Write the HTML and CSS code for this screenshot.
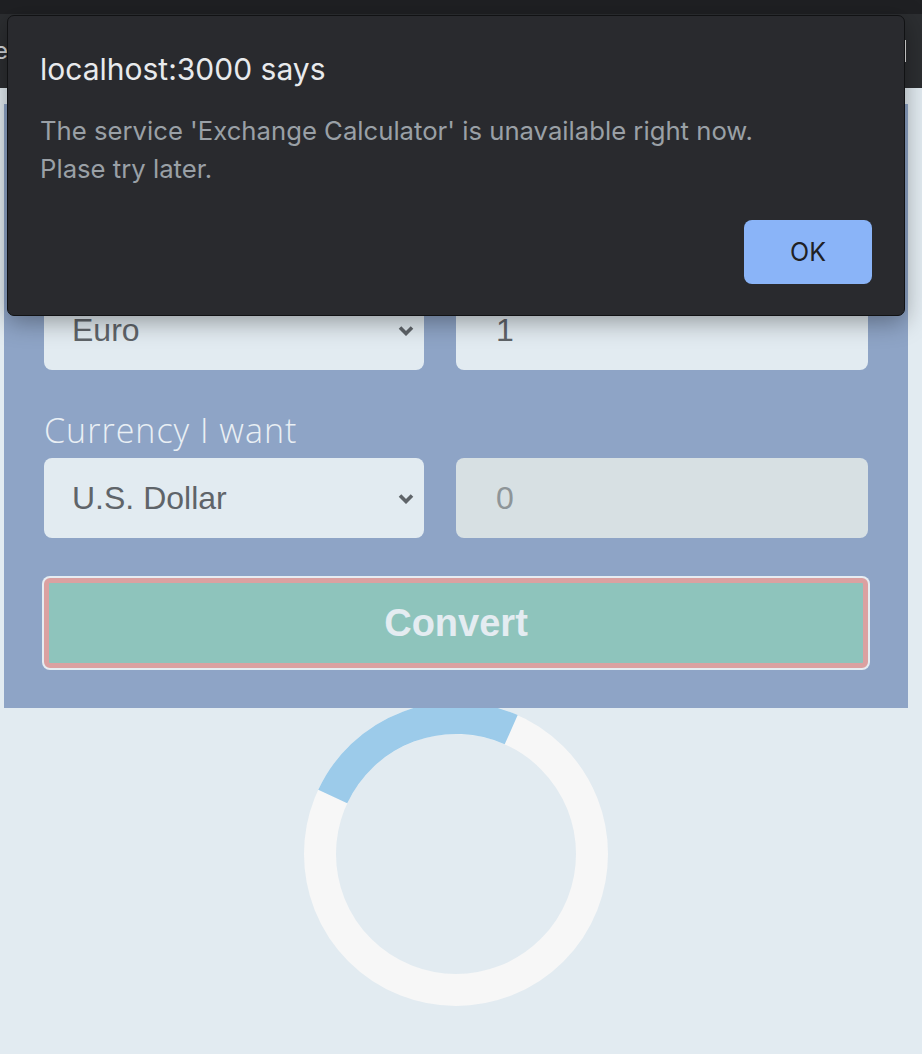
FILE: index.html
```html
<!DOCTYPE html>
<html lang="en">
<head>
<meta charset="utf-8">
<title>Exchange Calculator</title>
<link rel="stylesheet" href="styles.css">
</head>
<body>
<div class="chrome">
  <div class="chrome-top"></div>
  <div class="chrome-bar">
    <span class="tab-text">e</span>
    <span class="caret"></span>
  </div>
</div>
<main class="page">
  <section class="panel">
    <label class="label">Currency I have</label>
    <div class="row">
      <div class="select-wrap">
        <select class="field select"><option>Euro</option></select>
        <svg class="chev" width="16" height="11" viewBox="0 0 16 11"><path d="M2 2.5 L8 8.5 L14 2.5" fill="none" stroke="#5f6469" stroke-width="3.6"/></svg>
      </div>
      <input class="field input" value="1">
    </div>
    <label class="label label-want">Currency I want</label>
    <div class="row">
      <div class="select-wrap">
        <select class="field select"><option>U.S. Dollar</option></select>
        <svg class="chev" width="16" height="11" viewBox="0 0 16 11"><path d="M2 2.5 L8 8.5 L14 2.5" fill="none" stroke="#5f6469" stroke-width="3.6"/></svg>
      </div>
      <input class="field input" value="0" disabled>
    </div>
    <button class="convert">Convert</button>
  </section>
  <div class="spinner">
    <svg width="304" height="304" viewBox="0 0 304 304">
      <circle cx="152" cy="152" r="136" fill="none" stroke="#f7f7f7" stroke-width="32"/>
      <circle cx="152" cy="152" r="136" fill="none" stroke="#9ccbea" stroke-width="32" stroke-dasharray="211 700" transform="rotate(205 152 152)"/>
    </svg>
  </div>
</main>
<div class="dialog" role="alertdialog">
  <div class="dialog-title">localhost:3000 says</div>
  <div class="dialog-body">
    <p class="dialog-line">The service 'Exchange Calculator' is unavailable right now.</p>
    <p class="dialog-line">Plase try later.</p>
  </div>
  <div class="dialog-actions"><button class="ok">OK</button></div>
</div>
</body>
</html>
```

FILE: styles.css
```css
* { box-sizing: border-box; }
html, body { margin: 0; padding: 0; }
body {
  background: #e2ebf1;
  font-family: "Liberation Sans", Arial, sans-serif;
  width: 922px;
  height: 1054px;
  overflow: hidden;
  position: relative;
}

.chrome-top { height: 14px; background: #1f2023; }
.chrome-bar {
  height: 74px;
  background: #2c2e31;
  display: flex;
  align-items: center;
  justify-content: space-between;
  padding-right: 16px;
}
.tab-text {
  font-family: Inter, sans-serif;
  font-size: 24px;
  color: #d3d6da;
  margin-left: -6px;
  line-height: 1;
}
.caret { width: 2px; height: 22px; background: #e3e3e3; }

.page { padding: 16px 14px 0 4px; }

.panel {
  position: relative;
  z-index: 1;
  background: #8ea4c6;
  padding: 138px 40px 40px;
}
.label {
  display: block;
  font-family: "Open Sans", sans-serif;
  font-weight: 300;
  font-size: 34px;
  letter-spacing: 1px;
  line-height: 40px;
  color: #e9eff4;
  margin-bottom: 8px;
}
.label-want { margin-top: 40px; }

.row {
  display: grid;
  grid-template-columns: 380px 1fr;
  column-gap: 32px;
  height: 80px;
}
.select-wrap {
  display: grid;
  align-items: center;
}
.select-wrap > * { grid-area: 1 / 1; }
.field {
  height: 80px;
  border: none;
  border-radius: 8px;
  background: #e2ebf1;
  font-family: "Liberation Sans", Arial, sans-serif;
  font-size: 32px;
  color: #5f6469;
  outline: none;
  margin: 0;
}
.select {
  appearance: none;
  -webkit-appearance: none;
  width: 100%;
  padding: 0 40px 0 28px;
}
.chev { justify-self: end; margin-right: 10px; pointer-events: none; }
.input { width: 100%; padding: 0 20px 0 40px; }
.input:disabled { background: #d7e0e3; color: #8e9598; opacity: 1; -webkit-text-fill-color: #8e9598; }

.convert {
  display: block;
  width: 100%;
  height: 90px;
  margin-top: 40px;
  border: 5px solid #dba1a1;
  border-radius: 6px;
  background: #8ec4bc;
  box-shadow: 0 0 0 2px #e6edf2;
  font-family: "Liberation Sans", Arial, sans-serif;
  font-weight: bold;
  font-size: 38px;
  color: #e4ecf1;
}

.spinner {
  width: 304px;
  height: 304px;
  margin: -6px auto 0;
}
.spinner svg { display: block; }

.dialog {
  position: absolute;
  top: 15px;
  left: 7px;
  width: 898px;
  height: 301px;
  z-index: 10;
  background: #292a2e;
  border: 1px solid #111214;
  border-radius: 7px;
  box-shadow: 0 6px 24px rgba(0, 0, 0, 0.35);
  padding: 36px 32px 0 32px;
  font-family: Inter, "Noto Sans", sans-serif;
}
.dialog-title {
  font-size: 30px;
  line-height: 34px;
  color: #e8eaed;
}
.dialog-body {
  margin-top: 26px;
  font-size: 25.7px;
  line-height: 38px;
  color: #9aa0a6;
}
.dialog-line { margin: 0; }
.dialog-actions {
  display: flex;
  justify-content: flex-end;
  margin-top: 32px;
}
.ok {
  width: 128px;
  height: 64px;
  border: none;
  border-radius: 8px;
  background: #8ab4f8;
  color: #202124;
  font-family: Inter, "Noto Sans", sans-serif;
  font-size: 25px;
}
```
